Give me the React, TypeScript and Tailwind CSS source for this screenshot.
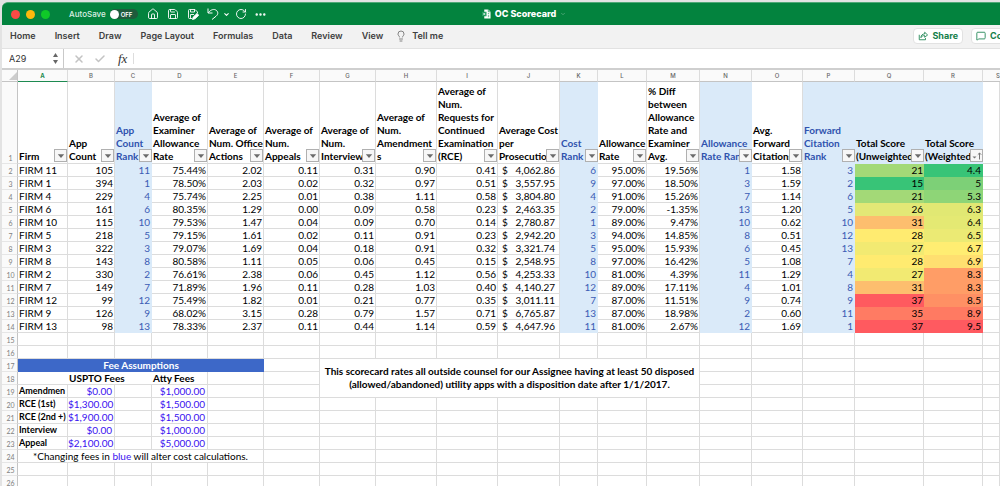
import React from "react";
import { House, Save, ChevronDown, RotateCw, Ellipsis, Lightbulb, X, Check, MessageSquare } from "lucide-react";

const columns = [
  { id: "A", w: 50 }, { id: "B", w: 47 }, { id: "C", w: 37 }, { id: "D", w: 56 },
  { id: "E", w: 56 }, { id: "F", w: 56 }, { id: "G", w: 56 }, { id: "H", w: 61 },
  { id: "I", w: 61 }, { id: "J", w: 62 }, { id: "K", w: 38 }, { id: "L", w: 49 },
  { id: "M", w: 53 }, { id: "N", w: 52 }, { id: "O", w: 51 }, { id: "P", w: 52 },
  { id: "Q", w: 69 }, { id: "R", w: 59 },
];

const headers: string[][] = [
  ["Firm"],
  ["App", "Count"],
  ["App", "Count", "Rank"],
  ["Average of", "Examiner", "Allowance", "Rate"],
  ["Average of", "Num. Office", "Actions"],
  ["Average of", "Num.", "Appeals"],
  ["Average of", "Num.", "Interviews"],
  ["Average of", "Num.", "Amendment", "s"],
  ["Average of", "Num.", "Requests for", "Continued", "Examination", "(RCE)"],
  ["Average Cost", "per", "Prosecution"],
  ["Cost", "Rank"],
  ["Allowance", "Rate"],
  ["% Diff", "between", "Allowance", "Rate and", "Examiner", "Avg."],
  ["Allowance", "Rate Rank"],
  ["Avg.", "Forward", "Citations"],
  ["Forward", "Citation", "Rank"],
  ["Total Score", "(Unweighted)"],
  ["Total Score", "(Weighted)"],
];

const data: string[][] = [
  ["FIRM 11", "105", "11", "75.44%", "2.02", "0.11", "0.31", "0.90", "0.41", "4,062.86", "6", "95.00%", "19.56%", "1", "1.58", "3", "21", "4.4"],
  ["FIRM 1", "394", "1", "78.50%", "2.03", "0.02", "0.32", "0.97", "0.51", "3,557.95", "9", "97.00%", "18.50%", "3", "1.59", "2", "15", "5"],
  ["FIRM 4", "229", "4", "75.74%", "2.25", "0.01", "0.38", "1.11", "0.58", "3,804.80", "4", "91.00%", "15.26%", "7", "1.14", "6", "21", "5.3"],
  ["FIRM 6", "161", "6", "80.35%", "1.29", "0.00", "0.09", "0.58", "0.23", "2,463.35", "2", "79.00%", "-1.35%", "13", "1.20", "5", "26", "6.3"],
  ["FIRM 10", "115", "10", "79.53%", "1.47", "0.04", "0.09", "0.70", "0.14", "2,780.87", "1", "89.00%", "9.47%", "10", "0.62", "10", "31", "6.4"],
  ["FIRM 5", "218", "5", "79.15%", "1.61", "0.02", "0.11", "0.91", "0.23", "2,942.20", "3", "94.00%", "14.85%", "8", "0.51", "12", "28", "6.5"],
  ["FIRM 3", "322", "3", "79.07%", "1.69", "0.04", "0.18", "0.91", "0.32", "3,321.74", "5", "95.00%", "15.93%", "6", "0.45", "13", "27", "6.7"],
  ["FIRM 8", "143", "8", "80.58%", "1.11", "0.05", "0.06", "0.45", "0.15", "2,548.95", "8", "97.00%", "16.42%", "5", "1.08", "7", "28", "6.9"],
  ["FIRM 2", "330", "2", "76.61%", "2.38", "0.06", "0.45", "1.12", "0.56", "4,253.33", "10", "81.00%", "4.39%", "11", "1.29", "4", "27", "8.3"],
  ["FIRM 7", "149", "7", "71.89%", "1.96", "0.11", "0.28", "1.03", "0.40", "4,140.27", "12", "89.00%", "17.11%", "4", "1.01", "8", "31", "8.3"],
  ["FIRM 12", "99", "12", "75.49%", "1.82", "0.01", "0.21", "0.77", "0.35", "3,011.11", "7", "87.00%", "11.51%", "9", "0.74", "9", "37", "8.5"],
  ["FIRM 9", "126", "9", "68.02%", "3.15", "0.28", "0.79", "1.57", "0.71", "6,765.87", "13", "87.00%", "18.98%", "2", "0.60", "11", "35", "8.9"],
  ["FIRM 13", "98", "13", "78.33%", "2.37", "0.11", "0.44", "1.14", "0.59", "4,647.96", "11", "81.00%", "2.67%", "12", "1.69", "1", "37", "9.5"],
];

const unweightedFill: Record<string, string> = {
  "15": "bg-[#38c477]", "21": "bg-[#a3d977]", "26": "bg-[#e3e876]", "27": "bg-[#f2ea72]",
  "28": "bg-[#ffeb70]", "31": "bg-[#fdbe6e]", "35": "bg-[#ff7b63]", "37": "bg-[#ff5a5f]",
};

const weightedFill: Record<string, string> = {
  "4.4": "bg-[#38c477]", "5": "bg-[#7dd077]", "5.3": "bg-[#8ed577]", "6.3": "bg-[#e1e873]",
  "6.4": "bg-[#e4e973]", "6.5": "bg-[#ebea74]", "6.7": "bg-[#ffed72]", "6.9": "bg-[#ffdf70]",
  "8.3": "bg-[#ff9d66]", "8.5": "bg-[#ff9064]", "8.9": "bg-[#ff7a62]", "9.5": "bg-[#ff5a60]",
};

const fees: [string, string, string][] = [
  ["Amendmen", "$0.00", "$1,000.00"],
  ["RCE (1st)", "$1,300.00", "$1,500.00"],
  ["RCE (2nd +)", "$1,900.00", "$1,500.00"],
  ["Interview", "$0.00", "$1,000.00"],
  ["Appeal", "$2,100.00", "$5,000.00"],
];

const menus = ["Home", "Insert", "Draw", "Page Layout", "Formulas", "Data", "Review", "View"];

const grid = "border-r border-b border-[#dcdcdc]";
const filledCell = "border-b border-transparent";
const rankColumns = new Set([2, 10, 13, 15]);

function RowHeader({ n }: { n: number }) {
  return (
    <th scope="row" className="h-[13px] border-r border-b border-r-[#c4c4c4] border-b-[#e6e6e6] bg-[#fafafa] p-0 pl-[2px] text-center align-bottom text-[7px] leading-[9px] font-normal text-[#808080]">
      {n}
    </th>
  );
}

function Blanks({ from, to }: { from: number; to: number }) {
  return (
    <>
      {Array.from({ length: to - from }, (_, i) => (
        <td key={i} className={`p-0 ${grid}`} />
      ))}
    </>
  );
}

function FilterButton({ label, sorted }: { label: string; sorted: boolean }) {
  return (
    <button type="button" aria-label={`Filter ${label}`} className="absolute right-0 bottom-px flex size-[13px] items-center justify-center border border-[#b0b0b0] bg-[#f7f7f7]">
      {sorted ? (
        <svg viewBox="0 0 10 10" className="size-[10px]" fill="none" stroke="#777" strokeWidth="1">
          <path d="M0.5 5.5h4L2.5 7.5z" fill="#777" stroke="none" />
          <path d="M7.5 8.5V2M5.8 3.7L7.5 2l1.7 1.7" />
        </svg>
      ) : (
        <svg viewBox="0 0 10 10" className="size-[10px]">
          <path d="M1.8 3.2h6.4L5 7z" fill="#6b6b6b" />
        </svg>
      )}
    </button>
  );
}

function TitleBar() {
  return (
    <header className="-mr-[46px] flex h-[23px] shrink-0 items-center rounded-tl-md border-t border-[#4fa877] bg-[#03833e] text-white">
      <div className="flex flex-1 items-center">
        <div className="flex gap-[6px] pl-[9px]">
          <button type="button" aria-label="Close" className="size-[9px] rounded-full bg-[#fb4a45]" />
          <button type="button" aria-label="Minimize" className="size-[9px] rounded-full bg-[#fdb90d]" />
          <button type="button" aria-label="Zoom" className="size-[9px] rounded-full bg-[#0fc928]" />
        </div>
        <span className="ml-[19px] text-[8px] font-medium text-[#dcefe4]">AutoSave</span>
        <button type="button" role="switch" aria-checked="false" aria-label="AutoSave" className="ml-1 flex h-[10px] w-[28px] items-center rounded-full bg-[#1f5b3c]">
          <span className="size-[9px] rounded-full bg-white" />
          <span className="ml-[2px] text-[6px] font-semibold">OFF</span>
        </button>
        <div className="ml-[9px] flex items-center">
          <button type="button" aria-label="Home">
            <House size={12} strokeWidth={1.8} />
          </button>
          <button type="button" aria-label="Save" className="ml-2">
            <Save size={12} strokeWidth={1.8} />
          </button>
          <button type="button" aria-label="Save as" className="ml-2">
            <svg viewBox="0 0 24 24" className="size-3" fill="none" stroke="currentColor" strokeWidth="1.8">
              <path d="M10 21H5a2 2 0 0 1-2-2V5a2 2 0 0 1 2-2h11l5 5v3M7 3v5h8V3M7 21v-8h7" />
              <path d="M11 23l1.500-5L20 11l3.500 3.500L16 21.500z" fill="currentColor" />
            </svg>
          </button>
          <button type="button" aria-label="Undo" className="ml-2">
            <svg viewBox="0 0 24 24" className="size-3" fill="none" stroke="currentColor" strokeWidth="2">
              <path d="M2 1v9h9M2.500 9.500C8 3 14 1 19 5c4 4 3 8-1 11.500L10 23" />
            </svg>
          </button>
          <button type="button" aria-label="Undo history" className="ml-1">
            <ChevronDown size={7} strokeWidth={3.5} />
          </button>
          <button type="button" aria-label="Redo" className="ml-[5px]">
            <RotateCw size={12} strokeWidth={1.8} />
          </button>
          <button type="button" aria-label="More" className="ml-[7px]">
            <Ellipsis size={13} strokeWidth={2.5} />
          </button>
        </div>
      </div>
      <div className="flex items-center gap-1">
        <svg viewBox="0 0 20 22" className="h-[10px] w-[9px]">
          <path d="M5 1h9l5 5v15H5z" fill="#fff" />
          <path d="M14 1v5h5" fill="none" stroke="#03833e" strokeWidth="1.500" />
          <path d="M0 6h10v10H0z" fill="#1d9a5b" />
          <path d="M3 8.500l4 5M7 8.500l-4 5" stroke="#fff" strokeWidth="1.500" />
          <path d="M13 10h3M13 14h3M13 17h3" stroke="#1d9a5b" strokeWidth="1.500" />
        </svg>
        <h1 className="text-[9px] font-extrabold">OC Scorecard</h1>
        <ChevronDown size={6} strokeWidth={2.5} className="text-[#6db58e]" />
      </div>
      <div className="flex-1" />
    </header>
  );
}

function MenuBar() {
  return (
    <nav className="flex h-6 shrink-0 items-center overflow-hidden border-b border-[#e2e2e2] bg-[#f2f2f2] pb-[2px] pl-[8px] text-[9px] font-semibold text-[#404040]">
      <div className="flex gap-[19px]">
        {menus.map((m) => (
          <button key={m} type="button">{m}</button>
        ))}
      </div>
      <button type="button" className="ml-3 flex items-center gap-[5px]">
        <Lightbulb size={12} strokeWidth={1.6} className="text-[#666]" />
        Tell me
      </button>
      <div className="ml-auto flex shrink-0 gap-2 text-[9px] font-bold text-[#13804a]">
        <button type="button" className="flex h-4 items-center gap-1 rounded-sm border border-[#e2e2e2] bg-white px-1">
          <svg viewBox="0 0 24 24" className="size-[10px]" fill="none" stroke="currentColor" strokeWidth="2">
            <path d="M3 9v12h15v-4M7 16c0-6 4-9 9-9V3l7 6.500L16 15v-4c-4 0-7 1-9 5z" />
          </svg>
          Share
        </button>
        <button type="button" className="-mr-11 flex h-4 w-[73px] shrink-0 items-center gap-1 rounded-sm border border-[#e2e2e2] bg-white px-1">
          <MessageSquare size={10} strokeWidth={2} className="shrink-0" />
          Comments
        </button>
      </div>
    </nav>
  );
}

function FormulaBar() {
  return (
    <div className="flex h-[21px] shrink-0 items-center border-b-2 border-[#cfcfcf] bg-white">
      <input aria-label="Name box" defaultValue="A29" className="w-[46px] bg-transparent pl-[7px] text-[9px] text-[#333] outline-none" />
      <div className="flex h-full w-4 flex-col items-center justify-center gap-[3px] border-r border-[#c9c9c9]">
        <svg viewBox="0 0 10 8" className="h-1 w-[5px]"><path d="M5 0l5 8H0z" fill="#666" /></svg>
        <svg viewBox="0 0 10 8" className="h-1 w-[5px]"><path d="M0 0h10L5 8z" fill="#666" /></svg>
      </div>
      <button type="button" aria-label="Cancel" className="ml-[9px] text-[#c3c3c3]"><X size={12} strokeWidth={3} /></button>
      <button type="button" aria-label="Enter" className="ml-[9px] text-[#c3c3c3]"><Check size={12} strokeWidth={3} /></button>
      <button type="button" aria-label="Insert function" className="ml-3 font-['Liberation_Serif',serif] text-[13px] leading-none text-[#333] italic">fx</button>
      <input aria-label="Formula" className="ml-[6px] h-[11px] min-w-0 flex-1 border-l border-[#ddd] bg-transparent text-[9px] outline-none" />
    </div>
  );
}

function ScoreCell({ col, value }: { col: number; value: string }) {
  if (col === 0) return <td className={`overflow-hidden p-0 pl-px ${grid}`}>{value}</td>;
  if (rankColumns.has(col)) return <td className={`bg-[#daeaf9] p-0 pr-[2px] text-right text-[#3a5cb4] ${filledCell}`}>{value}</td>;
  if (col === 16) return <td className={`p-0 pr-px text-right ${filledCell} ${unweightedFill[value]}`}>{value}</td>;
  if (col === 17) return <td className={`p-0 pr-[2px] text-right ${filledCell} ${weightedFill[value]}`}>{value}</td>;
  if (col === 9)
    return (
      <td className={`p-0 pr-1 pl-1 ${grid}`}>
        <span className="flex justify-between"><span>$</span><span>{value}</span></span>
      </td>
    );
  return <td className={`p-0 pr-px text-right ${grid}`}>{value}</td>;
}

function Sheet() {
  return (
    <table className="w-full table-fixed border-separate border-spacing-0 bg-white font-['Lato',sans-serif] text-[10px] leading-[12px] whitespace-nowrap text-black">
      <colgroup>
        <col className="w-[16px]" />
        {columns.map((c) => (
          <col key={c.id} style={{ width: c.w }} />
        ))}
        <col />
      </colgroup>
      <thead>
        <tr className="bg-[#fafafa] font-['Inter',sans-serif] text-[6px] text-[#666]">
          <th aria-label="Select all" className="h-[12px] border-r border-b border-[#c4c4c4] p-0">
            <svg viewBox="0 0 8 8" className="ml-auto size-2"><path d="M8 0v8H0z" fill="#ccc" /></svg>
          </th>
          {columns.map((c) => (
            <th
              key={c.id}
              scope="col"
              className={
                c.id === "A"
                  ? "border-r border-b border-r-[#dcdcdc] border-b-[#1d8a51] p-0 leading-[10px] font-bold text-[#1d8a51]"
                  : "border-r border-b border-r-[#dcdcdc] border-b-[#c4c4c4] p-0 leading-[10px] font-medium"
              }
            >
              {c.id}
            </th>
          ))}
          <th scope="col" className="border-b border-[#c4c4c4] p-0 text-right leading-[10px] font-medium">S</th>
        </tr>
      </thead>
      <tbody>
        <tr className="h-[82px]">
          <RowHeader n={1} />
          {headers.map((lines, i) => {
            const rank = rankColumns.has(i);
            const filled = rank || i > 15;
            return (
              <th
                key={i}
                scope="col"
                className={`relative overflow-hidden p-0 pl-px text-left align-bottom leading-[13px] font-bold ${rank ? "text-[#2f52ae]" : "text-black"} ${filled ? `bg-[#daeaf9] ${filledCell}` : grid}`}
              >
                {lines.map((l) => (
                  <div key={l}>{l}</div>
                ))}
                <FilterButton label={lines.join(" ")} sorted={i === 17} />
              </th>
            );
          })}
          <Blanks from={18} to={19} />
        </tr>
        {data.map((row, r) => (
          <tr key={row[0]} className="h-[13px]">
            <RowHeader n={r + 2} />
            {row.map((v, c) => (
              <ScoreCell key={c} col={c} value={v} />
            ))}
            <Blanks from={18} to={19} />
          </tr>
        ))}
        {[15, 16].map((n) => (
          <tr key={n} className="h-[13px]">
            <RowHeader n={n} />
            <Blanks from={0} to={19} />
          </tr>
        ))}
        <tr className="h-[13px]">
          <RowHeader n={17} />
          <th colSpan={5} className={`bg-[#3d68c8] p-0 text-center font-bold text-white ${filledCell}`}>Fee Assumptions</th>
          <Blanks from={5} to={6} />
          <td colSpan={7} rowSpan={3} className={`p-0 text-center leading-[13px] font-bold ${grid}`}>
            This scorecard rates all outside counsel for our Assignee having at least 50 disposed
            <br />
            (allowed/abandoned) utility apps with a disposition date after 1/1/2017.
          </td>
          <Blanks from={13} to={19} />
        </tr>
        <tr className="h-[13px]">
          <RowHeader n={18} />
          <td className="border-b border-[#dcdcdc] p-0" />
          <th colSpan={2} className="border-b border-[#dcdcdc] p-0 pl-px text-left font-bold">USPTO Fees</th>
          <th className={`p-0 pl-px text-left font-bold ${grid}`}>Atty Fees</th>
          <Blanks from={4} to={6} />
          <Blanks from={13} to={19} />
        </tr>
        {fees.map(([name, uspto, atty], i) => (
          <tr key={name} className="h-[13px]">
            <RowHeader n={19 + i} />
            <th scope="row" className={`p-0 pl-px text-left text-[9px] font-bold ${grid}`}>{name}</th>
            <td className={`p-0 pr-[2px] text-right text-[#3a12f0] ${grid}`}>{uspto}</td>
            <Blanks from={2} to={3} />
            <td className={`p-0 pr-[2px] text-right text-[#3a12f0] ${grid}`}>{atty}</td>
            <Blanks from={4} to={6} />
            {i === 0 ? <Blanks from={13} to={19} /> : <Blanks from={6} to={19} />}
          </tr>
        ))}
        <tr className="h-[13px]">
          <RowHeader n={24} />
          <td colSpan={5} className={`p-0 text-center ${grid}`}>
            *Changing fees in <span className="text-[#3a12f0]">blue</span> will alter cost calculations.
          </td>
          <Blanks from={5} to={19} />
        </tr>
        {[25, 26].map((n) => (
          <tr key={n} className="h-[13px]">
            <RowHeader n={n} />
            <Blanks from={0} to={19} />
          </tr>
        ))}
      </tbody>
    </table>
  );
}

export default function App() {
  return (
    <div className="flex h-screen flex-col overflow-hidden bg-[#e3e3e3] pt-[2px] pl-[2px] font-['Inter',sans-serif]">
      <TitleBar />
      <MenuBar />
      <FormulaBar />
      <main className="min-h-0 flex-1 overflow-hidden bg-white">
        <Sheet />
      </main>
    </div>
  );
}
